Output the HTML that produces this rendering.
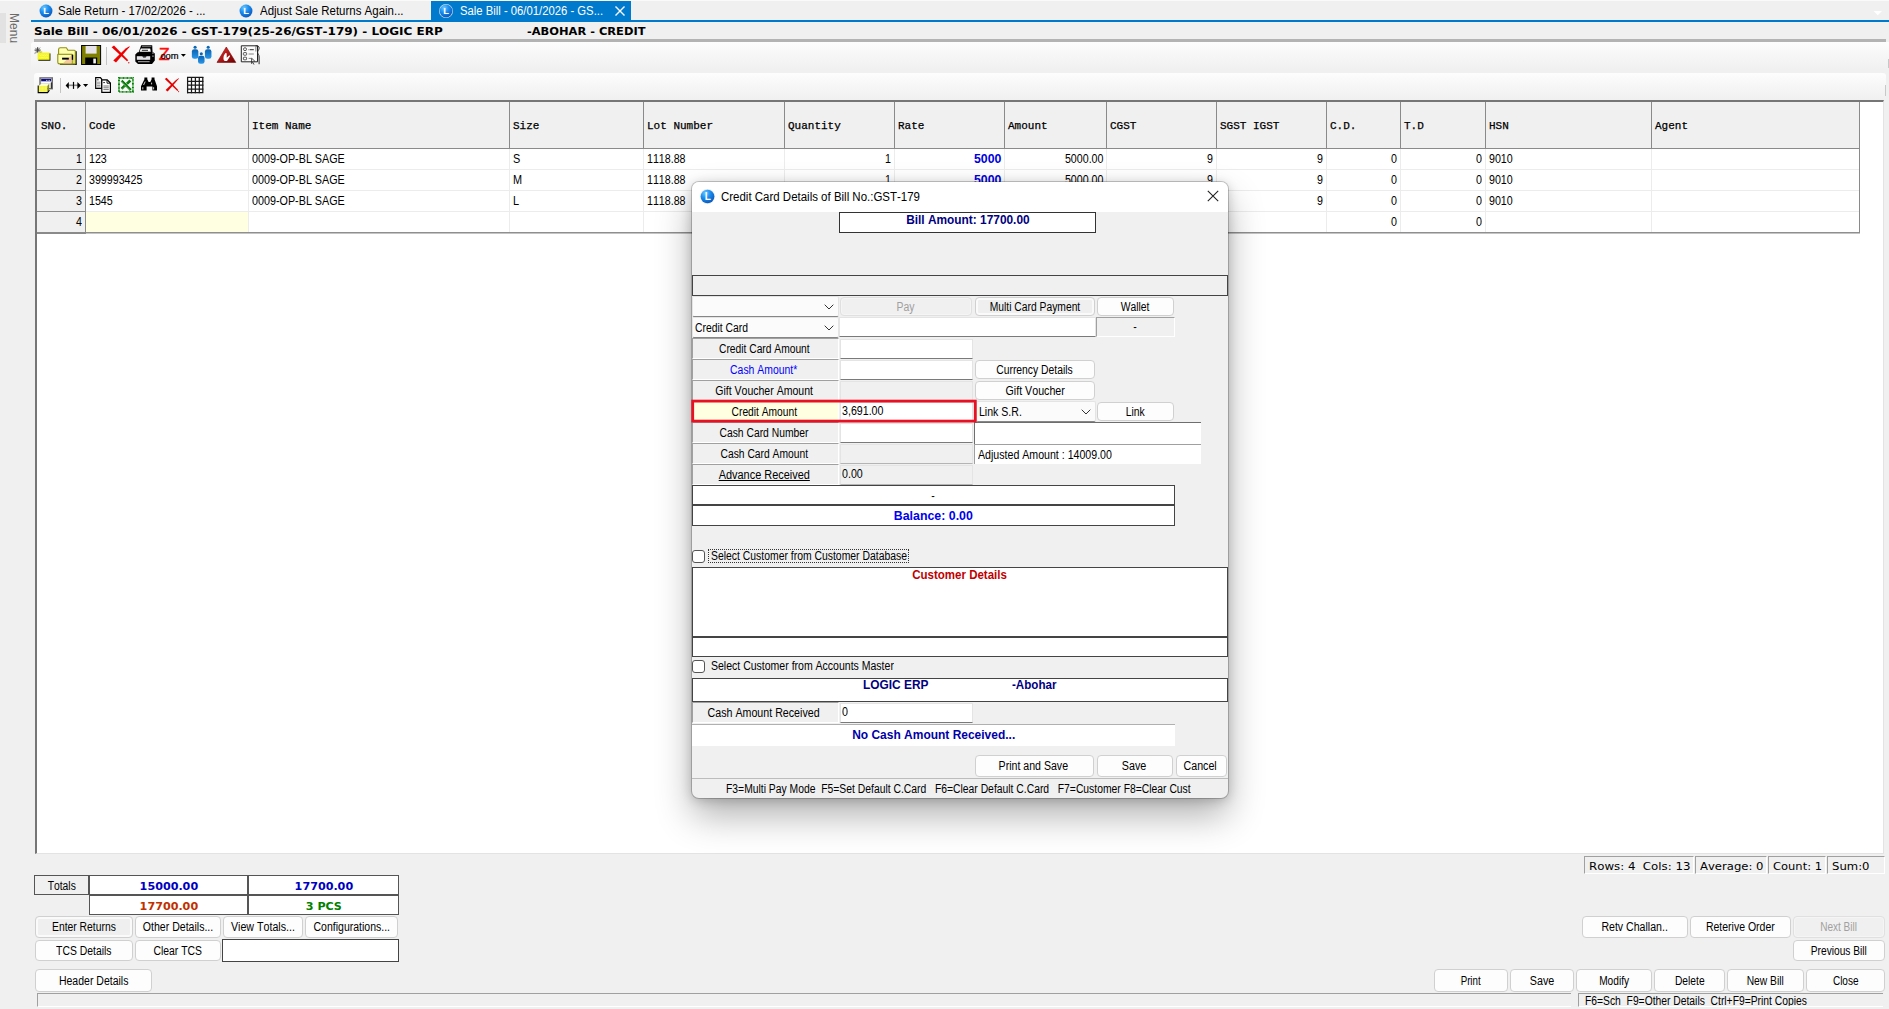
<!DOCTYPE html><html><head><meta charset="utf-8"><title>Sale Bill</title><style>
*{box-sizing:border-box;margin:0;padding:0}
html,body{width:1889px;height:1009px;overflow:hidden;background:#f0f0f0}
body{position:relative;font-family:"Liberation Sans",sans-serif;font-size:12.3px;color:#000}
.a{position:absolute;white-space:nowrap}
.seg{font-family:"Liberation Sans",sans-serif;font-size:12px}
.vb{font-family:"DejaVu Sans",sans-serif;font-weight:bold}
.v{font-family:"DejaVu Sans",sans-serif}
.mono{font-family:"Liberation Mono",monospace;font-weight:normal;font-size:11px;-webkit-text-stroke:0.25px #000}
.btn{position:absolute;border:1px solid #d0d0d0;border-radius:4px;background:#fdfdfd;text-align:center;white-space:nowrap}
.r{text-align:right}
.c{text-align:center}
.s{display:inline-block;white-space:nowrap;font-kerning:none}
</style></head><body>
<div class="a" style="left:0;top:0;width:1889px;height:1px;background:#fafafa"></div>
<div class="a" style="left:0;top:13px;width:6px;height:30px;background:#e2e2e2"></div>
<div class="a seg" style="left:3.5px;top:12.5px;width:20px;height:36px;color:#6a6a6a;font-size:13px;writing-mode:vertical-rl;line-height:20px"><span style="display:inline-block;transform:scaleY(0.925);transform-origin:center top">Menu</span></div>
<div class="a" style="left:31px;top:20px;width:1858px;height:2px;background:#007acc"></div>
<div class="a" style="left:431px;top:1px;width:200px;height:20px;background:#007acc"></div>
<svg class="a" style="left:39px;top:4px" width="14" height="14" viewBox="0 0 14 14"><defs><radialGradient id="lg1" cx="35%" cy="25%" r="80%"><stop offset="0" stop-color="#6cc8ff"/><stop offset="0.45" stop-color="#1c8ef0"/><stop offset="1" stop-color="#0a56b8"/></radialGradient></defs><circle cx="7" cy="7" r="6.95" fill="#dfe6ee"/><circle cx="7" cy="7" r="6.4" fill="url(#lg1)"/><text x="7.2" y="10.3" font-family="Liberation Sans,sans-serif" font-size="9.4" font-weight="bold" fill="#fff" text-anchor="middle">L</text></svg>
<div class="a" style="left:58px;top:3px;font-size:12.5px;line-height:16px;color:#000;"><span class="s" style="transform:scaleX(0.915);transform-origin:left center">Sale Return - 17/02/2026 - ...</span></div>
<svg class="a" style="left:239px;top:4px" width="14" height="14" viewBox="0 0 14 14"><defs><radialGradient id="lg2" cx="35%" cy="25%" r="80%"><stop offset="0" stop-color="#6cc8ff"/><stop offset="0.45" stop-color="#1c8ef0"/><stop offset="1" stop-color="#0a56b8"/></radialGradient></defs><circle cx="7" cy="7" r="6.95" fill="#dfe6ee"/><circle cx="7" cy="7" r="6.4" fill="url(#lg2)"/><text x="7.2" y="10.3" font-family="Liberation Sans,sans-serif" font-size="9.4" font-weight="bold" fill="#fff" text-anchor="middle">L</text></svg>
<div class="a" style="left:260px;top:3px;font-size:12.5px;line-height:16px;color:#000;"><span class="s" style="transform:scaleX(0.918);transform-origin:left center">Adjust Sale Returns Again...</span></div>
<svg class="a" style="left:439px;top:4px" width="14" height="14" viewBox="0 0 14 14"><defs><radialGradient id="lg3" cx="35%" cy="25%" r="80%"><stop offset="0" stop-color="#6cc8ff"/><stop offset="0.45" stop-color="#1c8ef0"/><stop offset="1" stop-color="#0a56b8"/></radialGradient></defs><circle cx="7" cy="7" r="6.95" fill="#dfe6ee"/><circle cx="7" cy="7" r="6.4" fill="url(#lg3)"/><text x="7.2" y="10.3" font-family="Liberation Sans,sans-serif" font-size="9.4" font-weight="bold" fill="#fff" text-anchor="middle">L</text></svg>
<div class="a" style="left:460px;top:3px;font-size:12.5px;line-height:16px;color:#fff;"><span class="s" style="transform:scaleX(0.903);transform-origin:left center">Sale Bill - 06/01/2026 - GS...</span></div>
<svg class="a" style="left:614px;top:5px" width="12" height="12" viewBox="0 0 12 12"><path d="M1.5 1.5L10.5 10.5M10.5 1.5L1.5 10.5" stroke="#fff" stroke-width="1.4"/></svg>
<svg class="a" style="left:1873px;top:10px" width="10" height="6" viewBox="0 0 10 6"><path d="M0.6 0.9H9L4.8 5.3Z" fill="#fff"/></svg>
<div class="a" style="left:34px;top:23.5px;font-size:11px;line-height:15px;color:#000;font-family:DejaVu Sans,sans-serif;font-weight:bold;"><span class="s" style="transform:scaleX(1.091);transform-origin:left center">Sale Bill - 06/01/2026 - GST-179(25-26/GST-179) - LOGIC ERP</span></div>
<div class="a" style="left:527px;top:23.5px;font-size:11px;line-height:15px;color:#000;font-family:DejaVu Sans,sans-serif;font-weight:bold;"><span class="s" style="transform:scaleX(1.039);transform-origin:left center">-ABOHAR - CREDIT</span></div>
<div class="a" style="left:34px;top:39px;width:1852px;height:3px;background:#b3b3b3"></div>
<div class="a" style="left:31px;top:42px;width:1858px;height:28px;background:linear-gradient(#fdfdfd,#f6f6f6 50%,#f0f0f0);border-radius:3px 0 0 3px"></div><div class="a" style="left:1888px;top:59px;width:1px;height:9px;background:#c8c8c8"></div>
<div class="a" style="left:34px;top:73px;width:1851.5px;height:27px;background:linear-gradient(#fdfdfd,#f6f6f6 50%,#f0f0f0);border-radius:3px"></div><div class="a" style="left:1885px;top:85px;width:1px;height:11px;background:#c8c8c8"></div>
<svg class="a" style="left:0;top:0" width="300" height="100" viewBox="0 0 300 100"><defs><linearGradient id="gtri" x1="0" y1="0" x2="1" y2="1"><stop offset="0" stop-color="#f03030"/><stop offset="1" stop-color="#6a0000"/></linearGradient><linearGradient id="gblu" x1="0" y1="0" x2="0" y2="1"><stop offset="0" stop-color="#0a62b0"/><stop offset="1" stop-color="#2a98ea"/></linearGradient></defs><rect x="38.3" y="53.4" width="12.1" height="7.3" fill="#000"/><rect x="37.6" y="52.6" width="12" height="7.2" fill="#f6f61e"/><rect x="39.6" y="51.2" width="2.6" height="1.6" fill="#d6d648"/><path d="M39.5 54.6l1.2 1.2 1.2-1.2 1.2 1.2 1.2-1.2 1.2 1.2 1.2-1.2 1.2 1.2M39.5 57l1.2 1.2 1.2-1.2 1.2 1.2 1.2-1.2 1.2 1.2 1.2-1.2 1.2 1.2" stroke="#ffffb0" stroke-width="0.7" fill="none" opacity="0.8"/><path d="M37.7 47.2V52.6M34.6 50.1H40.6" stroke="#111" stroke-width="0.9"/><path d="M35.4 47.9L39.8 52.3M40 47.6L35.2 52.6" stroke="#555" stroke-width="0.8"/><path d="M34.4 53.6L37 52.4" stroke="#888" stroke-width="0.7"/><rect x="75" y="51.2" width="1.7" height="13.5" fill="#000"/><rect x="60" y="63.6" width="16.7" height="1.2" fill="#1a1a00"/><path d="M58.6 54.5V49.6Q58.6 47.8 60.4 47.8H66.4L67.9 50.2H74.4Q75.3 50.2 75.3 51.2V63.6H72V54.5Z" fill="#ffffae" stroke="#8e8e14" stroke-width="1.1" stroke-linejoin="round"/><path d="M72.3 54.6H75V63.4H72.3Z" fill="#dcdc6a"/><path d="M57.8 54.3H72.1V63.9H59.6Q57.8 63.9 57.8 62.2Z" fill="#ffffb2" stroke="#8e8e14" stroke-width="1.1" stroke-linejoin="round"/><path d="M62.8 63.3L71.5 55.2V63.3Z" fill="#f7c6a2"/><rect x="71.8" y="54.8" width="1.3" height="5" fill="#000"/><rect x="62.1" y="57.7" width="6.7" height="1.9" fill="#000"/><rect x="81.6" y="45.5" width="19" height="19" fill="#808000" stroke="#000" stroke-width="1"/><rect x="85.6" y="45.9" width="11" height="7.7" fill="#e6e4ea"/><rect x="85.2" y="57.5" width="12" height="7" fill="#000"/><rect x="93.3" y="58.6" width="2.6" height="4.8" fill="#f4f4f4"/><rect x="106" y="47" width="1" height="18" fill="#c4c4c4"/><path d="M111.6 47.2L114 45.6L128.3 60.2L127 61.2Z" fill="#ee0000"/><path d="M129.8 45.9L129.3 47.3L116 62.6L113.3 60.5L125.6 48.4Z" fill="#ee0000"/><circle cx="128.8" cy="62.8" r="0.7" fill="#d02020"/><path d="M141.2 45.2H152.2L152.6 53H138.4Z" fill="#000"/><path d="M140.8 48.6H150.2L150.8 51.8H139.6Z" fill="#fff"/><rect x="141.8" y="49.8" width="6.2" height="0.9" fill="#000"/><path d="M142 46.6H151.4" stroke="#777" stroke-width="0.9"/><path d="M135.3 54.4L137.6 52.2H153L154.8 53.6V60.6L152 63.9H138L135.3 61.4Z" fill="#000"/><rect x="136.8" y="56.2" width="13.4" height="3.6" fill="#e4e4e8"/><path d="M142.2 56.2H146.6L145.6 57.6H143.2Z" fill="#000"/><rect x="138" y="61.2" width="11.6" height="1" fill="#b0b0b0"/><rect x="152.2" y="52.4" width="1.5" height="1.5" fill="#808080"/><rect x="152.2" y="55.4" width="1.5" height="1.5" fill="#808080"/><text transform="translate(158.8 59.8) scale(1.15 1)" font-family="Liberation Sans,sans-serif" font-size="15.6" fill="#ff1010" stroke="#ff1010" stroke-width="0.3">Z</text><text x="160.4" y="58.9" font-family="Liberation Sans,sans-serif" font-size="9.8" fill="#000" stroke="#000" stroke-width="0.2" textLength="18.2" lengthAdjust="spacingAndGlyphs">oom</text><path d="M180.9 53.9H185.9L183.4 56.8Z" fill="#000"/><circle cx="195.1" cy="47.3" r="1.55" fill="#0b66b4"/><rect x="191.85" y="49.2" width="6.5" height="9.6" rx="2.4" fill="url(#gblu)"/><circle cx="208.2" cy="47.3" r="1.55" fill="#0b66b4"/><rect x="204.95" y="49.2" width="6.5" height="9.6" rx="2.4" fill="url(#gblu)"/><circle cx="201.3" cy="53.8" r="1.55" fill="#0b66b4"/><rect x="198.05" y="55.7" width="6.5" height="8.1" rx="2.4" fill="url(#gblu)"/><path d="M226.3 47L235.8 62.4H217Z" fill="url(#gtri)" stroke="#7a0000" stroke-width="0.6" stroke-linejoin="round"/><path d="M225.3 53.2c0.8-0.5 1.4 0 1.4 1v3.6l2.4-2.2c0.7-0.5 1.3 0.2 0.8 0.9l-2.2 3.4c-0.6 1.5-3.3 1.6-4 0.1c-0.6-1.6 0-4.6 0.6-5.2z" fill="#fff"/><path d="M241.3 45.8H257.5V61.8H241.3Z" fill="#fbfbfb" stroke="#222" stroke-width="1"/><path d="M255.5 46c2.6-0.6 3.8 0.4 3.6 2.4c-0.2 1.6-1.6 2.6-1.4 4.2c0.2 1.6 1.4 2 1.4 4.4V64.2" fill="none" stroke="#222" stroke-width="1"/><path d="M255.8 46.5V51.5" stroke="#999" stroke-width="1.2"/><circle cx="245" cy="49.2" r="1.5" fill="none" stroke="#333" stroke-width="0.8"/><rect x="243.4" y="52.6" width="3.2" height="2.6" rx="0.6" fill="none" stroke="#333" stroke-width="0.8"/><rect x="243.4" y="57.2" width="3.2" height="2.6" rx="0.6" fill="none" stroke="#333" stroke-width="0.8"/><path d="M248.6 49.6H253.8" stroke="#555" stroke-width="1.2" stroke-dasharray="0.8 0.6 4 0"/><path d="M248.6 54H253.8M248.6 58.4H251" stroke="#666" stroke-width="0.8"/><path d="M251.6 58.2V63.6L252.8 62.4L254 64.6M251.6 58.2L255 61.4" fill="none" stroke="#222" stroke-width="0.8"/><rect x="40" y="77.9" width="12.3" height="10.8" fill="#dedede" stroke="#6c6c6c" stroke-width="1.4"/><rect x="41.2" y="79" width="9.9" height="2.2" fill="#0a0a90"/><path d="M46 80.4H50.6" stroke="#fff" stroke-width="0.8" stroke-dasharray="0.9 0.7"/><path d="M41.4 82.6H50.8" stroke="#fff" stroke-width="1"/><path d="M51.4 82.4V88.4" stroke="#111" stroke-width="0.9"/><path d="M38.6 86L41 84H49L47.4 86Z" fill="#ffffc8"/><rect x="38.6" y="86" width="8.8" height="6" fill="#f4f43a"/><path d="M39.4 87.2h7.4M39.4 88.6h7.4M39.4 90h7.4M39.4 91.4h7.4" stroke="#ffffb4" stroke-width="0.6" stroke-dasharray="0.7 0.7"/><path d="M47.4 86L49 84V89.8L47.4 92Z" fill="#8a8a10"/><path d="M38.2 85.6V92.6H47.6L49.4 90.2" fill="none" stroke="#000" stroke-width="1.1"/><rect x="60" y="78" width="1" height="15" fill="#c4c4c4"/><path d="M67 85.3H80" stroke="#8a8a8a" stroke-width="1.6"/><path d="M65.6 85.4L68.8 81.9V88.9Z" fill="#000"/><path d="M80.9 85.4L77.4 81.9V88.9Z" fill="#000"/><path d="M73.5 81.9V88.9" stroke="#000" stroke-width="1.2"/><path d="M83 83.9H88.2L85.6 87.1Z" fill="#000"/><path d="M95.7 77.7H100.4L101.6 79V88.4H95.7Z" fill="#fff" stroke="#000" stroke-width="1.2"/><path d="M97 79.8H98.6" stroke="#000" stroke-width="0.8"/><path d="M97 82.2H100.4M97 83.8H100.4M97 85.4H100.4M97 87H100.4" stroke="#7a7a7a" stroke-width="0.8"/><path d="M101.8 79.8H107.2L110.4 83V92.3H101.8Z" fill="#fff" stroke="#000" stroke-width="1.2" stroke-linejoin="miter"/><path d="M107 80V83.2H110.2" fill="none" stroke="#000" stroke-width="0.9"/><path d="M103.2 82.6H105" stroke="#000" stroke-width="0.8"/><path d="M103.4 86H108.8M103.4 87.8H108.8M103.4 89.6H108.8" stroke="#6a6a6a" stroke-width="0.9"/><rect x="119" y="78" width="13.9" height="13.9" fill="#fff" stroke="#008000" stroke-width="1.9" stroke-dasharray="0.9 0.45"/><path d="M121.6 80.6L130.8 90M130.4 80.4L121.6 88.8" stroke="#0d7d0d" stroke-width="2.7"/><path d="M121 81.4L129.8 90.4M123 79.8L131.6 88.8" stroke="#fff" stroke-width="0.45"/><path d="M125 86.8L121 90.6" stroke="#cfe8cf" stroke-width="0.5"/><path d="M144.4 77.4H147.3V79.3L148.6 82H150.3L151.6 79.3V77.4H154.5V79.3L157 86.2V90.6H152.4V86.4H146.6V90.6H141V86.2L144.4 79.3Z" fill="#000"/><path d="M142.8 87.2V89.4M145.2 81.6L143.6 85M153.6 87.2V89.4M151.6 82.6V84.4" stroke="#fff" stroke-width="0.8"/><path d="M164.8 78.9L166.6 77.7L178.4 90.3L177.4 91.1Z" fill="#e40000"/><path d="M179 77.9L178.6 78.9L167.6 91.6L165.6 90L176 80Z" fill="#e40000"/><circle cx="178.6" cy="91.6" r="0.6" fill="#d02020"/><rect x="187.4" y="77.4" width="15.4" height="15.4" fill="#fff"/><path d="M187.6 77V93.2M187 77.4H203.4" stroke="#1a1a1a" stroke-width="1.25"/><path d="M191.5 77V93.2M187 81.3H203.4" stroke="#1a1a1a" stroke-width="1.25"/><path d="M195.4 77V93.2M187 85.2H203.4" stroke="#1a1a1a" stroke-width="1.25"/><path d="M199.3 77V93.2M187 89.1H203.4" stroke="#1a1a1a" stroke-width="1.25"/><path d="M202.8 77V93.2M187 92.6H203.4" stroke="#1a1a1a" stroke-width="1.25"/></svg>
<div class="a" style="left:35px;top:100px;width:1849px;height:754px;background:#fff;border-left:2px solid #767676;border-top:2px solid #767676;border-right:1px solid #e3e3e3;border-bottom:1px solid #e3e3e3"></div>
<div class="a" style="left:37px;top:102px;width:1823px;height:47px;background:#f0f0f0;border-bottom:1px solid #8a8a8a;border-right:1px solid #8a8a8a"></div>
<div class="a" style="left:37px;top:149px;width:48px;height:84px;background:#f0f0f0"></div>
<div class="a" style="left:86px;top:212px;width:162px;height:21px;background:#ffffe1"></div>
<div class="a" style="left:85px;top:102px;width:1px;height:47px;background:#8a8a8a"></div>
<div class="a" style="left:85px;top:149px;width:1px;height:85px;background:#8a8a8a"></div>
<div class="a" style="left:248px;top:102px;width:1px;height:47px;background:#8a8a8a"></div>
<div class="a" style="left:248px;top:149px;width:1px;height:83px;background:#ececec"></div>
<div class="a" style="left:509px;top:102px;width:1px;height:47px;background:#8a8a8a"></div>
<div class="a" style="left:509px;top:149px;width:1px;height:83px;background:#ececec"></div>
<div class="a" style="left:643px;top:102px;width:1px;height:47px;background:#8a8a8a"></div>
<div class="a" style="left:643px;top:149px;width:1px;height:83px;background:#ececec"></div>
<div class="a" style="left:784px;top:102px;width:1px;height:47px;background:#8a8a8a"></div>
<div class="a" style="left:784px;top:149px;width:1px;height:83px;background:#ececec"></div>
<div class="a" style="left:894px;top:102px;width:1px;height:47px;background:#8a8a8a"></div>
<div class="a" style="left:894px;top:149px;width:1px;height:83px;background:#ececec"></div>
<div class="a" style="left:1004px;top:102px;width:1px;height:47px;background:#8a8a8a"></div>
<div class="a" style="left:1004px;top:149px;width:1px;height:83px;background:#ececec"></div>
<div class="a" style="left:1106px;top:102px;width:1px;height:47px;background:#8a8a8a"></div>
<div class="a" style="left:1106px;top:149px;width:1px;height:83px;background:#ececec"></div>
<div class="a" style="left:1216px;top:102px;width:1px;height:47px;background:#8a8a8a"></div>
<div class="a" style="left:1216px;top:149px;width:1px;height:83px;background:#ececec"></div>
<div class="a" style="left:1326px;top:102px;width:1px;height:47px;background:#8a8a8a"></div>
<div class="a" style="left:1326px;top:149px;width:1px;height:83px;background:#ececec"></div>
<div class="a" style="left:1400px;top:102px;width:1px;height:47px;background:#8a8a8a"></div>
<div class="a" style="left:1400px;top:149px;width:1px;height:83px;background:#ececec"></div>
<div class="a" style="left:1485px;top:102px;width:1px;height:47px;background:#8a8a8a"></div>
<div class="a" style="left:1485px;top:149px;width:1px;height:83px;background:#ececec"></div>
<div class="a" style="left:1651px;top:102px;width:1px;height:47px;background:#8a8a8a"></div>
<div class="a" style="left:1651px;top:149px;width:1px;height:83px;background:#ececec"></div>
<div class="a mono" style="left:41px;top:119px;line-height:14px">SNO.</div>
<div class="a mono" style="left:89px;top:119px;line-height:14px">Code</div>
<div class="a mono" style="left:252px;top:119px;line-height:14px">Item Name</div>
<div class="a mono" style="left:513px;top:119px;line-height:14px">Size</div>
<div class="a mono" style="left:647px;top:119px;line-height:14px">Lot Number</div>
<div class="a mono" style="left:788px;top:119px;line-height:14px">Quantity</div>
<div class="a mono" style="left:898px;top:119px;line-height:14px">Rate</div>
<div class="a mono" style="left:1008px;top:119px;line-height:14px">Amount</div>
<div class="a mono" style="left:1110px;top:119px;line-height:14px">CGST</div>
<div class="a mono" style="left:1220px;top:119px;line-height:14px">SGST IGST</div>
<div class="a mono" style="left:1330px;top:119px;line-height:14px">C.D.</div>
<div class="a mono" style="left:1404px;top:119px;line-height:14px">T.D</div>
<div class="a mono" style="left:1489px;top:119px;line-height:14px">HSN</div>
<div class="a mono" style="left:1655px;top:119px;line-height:14px">Agent</div>
<div class="a" style="left:37px;top:169px;width:48px;height:1px;background:#8a8a8a"></div>
<div class="a" style="left:86px;top:169px;width:1774px;height:1px;background:#ececec"></div>
<div class="a r" style="left:-118px;width:200px;top:152px;font-size:12.3px;line-height:14px;color:#000;"><span class="s" style="transform:scaleX(0.868);transform-origin:right center">1</span></div>
<div class="a" style="left:89px;top:152px;font-size:12.3px;line-height:14px;color:#000;"><span class="s" style="transform:scaleX(0.868);transform-origin:left center">123</span></div>
<div class="a" style="left:252px;top:152px;font-size:12.3px;line-height:14px;color:#000;"><span class="s" style="transform:scaleX(0.876);transform-origin:left center">0009-OP-BL SAGE</span></div>
<div class="a" style="left:513px;top:152px;font-size:12.3px;line-height:14px;color:#000;"><span class="s" style="transform:scaleX(0.886);transform-origin:left center">S</span></div>
<div class="a" style="left:647px;top:152px;font-size:12.3px;line-height:14px;color:#000;"><span class="s" style="transform:scaleX(0.867);transform-origin:left center">1118.88</span></div>
<div class="a r" style="left:691px;width:200px;top:152px;font-size:12.3px;line-height:14px;color:#000;"><span class="s" style="transform:scaleX(0.868);transform-origin:right center">1</span></div>
<div class="a r" style="left:801px;width:200px;top:152px;font-size:12.3px;line-height:14px;color:#0000e0;font-weight:bold;"><span class="s" style="transform:scaleX(1.001);transform-origin:right center">5000</span></div>
<div class="a r" style="left:903px;width:200px;top:152px;font-size:12.3px;line-height:14px;color:#000;"><span class="s" style="transform:scaleX(0.867);transform-origin:right center">5000.00</span></div>
<div class="a r" style="left:1013px;width:200px;top:152px;font-size:12.3px;line-height:14px;color:#000;"><span class="s" style="transform:scaleX(0.868);transform-origin:right center">9</span></div>
<div class="a r" style="left:1123px;width:200px;top:152px;font-size:12.3px;line-height:14px;color:#000;"><span class="s" style="transform:scaleX(0.868);transform-origin:right center">9</span></div>
<div class="a r" style="left:1197px;width:200px;top:152px;font-size:12.3px;line-height:14px;color:#000;"><span class="s" style="transform:scaleX(0.868);transform-origin:right center">0</span></div>
<div class="a r" style="left:1282px;width:200px;top:152px;font-size:12.3px;line-height:14px;color:#000;"><span class="s" style="transform:scaleX(0.868);transform-origin:right center">0</span></div>
<div class="a" style="left:1489px;top:152px;font-size:12.3px;line-height:14px;color:#000;"><span class="s" style="transform:scaleX(0.868);transform-origin:left center">9010</span></div>
<div class="a" style="left:37px;top:190px;width:48px;height:1px;background:#8a8a8a"></div>
<div class="a" style="left:86px;top:190px;width:1774px;height:1px;background:#ececec"></div>
<div class="a r" style="left:-118px;width:200px;top:173px;font-size:12.3px;line-height:14px;color:#000;"><span class="s" style="transform:scaleX(0.868);transform-origin:right center">2</span></div>
<div class="a" style="left:89px;top:173px;font-size:12.3px;line-height:14px;color:#000;"><span class="s" style="transform:scaleX(0.868);transform-origin:left center">399993425</span></div>
<div class="a" style="left:252px;top:173px;font-size:12.3px;line-height:14px;color:#000;"><span class="s" style="transform:scaleX(0.876);transform-origin:left center">0009-OP-BL SAGE</span></div>
<div class="a" style="left:513px;top:173px;font-size:12.3px;line-height:14px;color:#000;"><span class="s" style="transform:scaleX(0.886);transform-origin:left center">M</span></div>
<div class="a" style="left:647px;top:173px;font-size:12.3px;line-height:14px;color:#000;"><span class="s" style="transform:scaleX(0.867);transform-origin:left center">1118.88</span></div>
<div class="a r" style="left:691px;width:200px;top:173px;font-size:12.3px;line-height:14px;color:#000;"><span class="s" style="transform:scaleX(0.868);transform-origin:right center">1</span></div>
<div class="a r" style="left:801px;width:200px;top:173px;font-size:12.3px;line-height:14px;color:#0000e0;font-weight:bold;"><span class="s" style="transform:scaleX(1.001);transform-origin:right center">5000</span></div>
<div class="a r" style="left:903px;width:200px;top:173px;font-size:12.3px;line-height:14px;color:#000;"><span class="s" style="transform:scaleX(0.867);transform-origin:right center">5000.00</span></div>
<div class="a r" style="left:1013px;width:200px;top:173px;font-size:12.3px;line-height:14px;color:#000;"><span class="s" style="transform:scaleX(0.868);transform-origin:right center">9</span></div>
<div class="a r" style="left:1123px;width:200px;top:173px;font-size:12.3px;line-height:14px;color:#000;"><span class="s" style="transform:scaleX(0.868);transform-origin:right center">9</span></div>
<div class="a r" style="left:1197px;width:200px;top:173px;font-size:12.3px;line-height:14px;color:#000;"><span class="s" style="transform:scaleX(0.868);transform-origin:right center">0</span></div>
<div class="a r" style="left:1282px;width:200px;top:173px;font-size:12.3px;line-height:14px;color:#000;"><span class="s" style="transform:scaleX(0.868);transform-origin:right center">0</span></div>
<div class="a" style="left:1489px;top:173px;font-size:12.3px;line-height:14px;color:#000;"><span class="s" style="transform:scaleX(0.868);transform-origin:left center">9010</span></div>
<div class="a" style="left:37px;top:211px;width:48px;height:1px;background:#8a8a8a"></div>
<div class="a" style="left:86px;top:211px;width:1774px;height:1px;background:#ececec"></div>
<div class="a r" style="left:-118px;width:200px;top:194px;font-size:12.3px;line-height:14px;color:#000;"><span class="s" style="transform:scaleX(0.868);transform-origin:right center">3</span></div>
<div class="a" style="left:89px;top:194px;font-size:12.3px;line-height:14px;color:#000;"><span class="s" style="transform:scaleX(0.868);transform-origin:left center">1545</span></div>
<div class="a" style="left:252px;top:194px;font-size:12.3px;line-height:14px;color:#000;"><span class="s" style="transform:scaleX(0.876);transform-origin:left center">0009-OP-BL SAGE</span></div>
<div class="a" style="left:513px;top:194px;font-size:12.3px;line-height:14px;color:#000;"><span class="s" style="transform:scaleX(0.886);transform-origin:left center">L</span></div>
<div class="a" style="left:647px;top:194px;font-size:12.3px;line-height:14px;color:#000;"><span class="s" style="transform:scaleX(0.867);transform-origin:left center">1118.88</span></div>
<div class="a r" style="left:691px;width:200px;top:194px;font-size:12.3px;line-height:14px;color:#000;"><span class="s" style="transform:scaleX(0.868);transform-origin:right center">1</span></div>
<div class="a r" style="left:801px;width:200px;top:194px;font-size:12.3px;line-height:14px;color:#0000e0;font-weight:bold;"><span class="s" style="transform:scaleX(1.001);transform-origin:right center">5000</span></div>
<div class="a r" style="left:903px;width:200px;top:194px;font-size:12.3px;line-height:14px;color:#000;"><span class="s" style="transform:scaleX(0.867);transform-origin:right center">5000.00</span></div>
<div class="a r" style="left:1013px;width:200px;top:194px;font-size:12.3px;line-height:14px;color:#000;"><span class="s" style="transform:scaleX(0.868);transform-origin:right center">9</span></div>
<div class="a r" style="left:1123px;width:200px;top:194px;font-size:12.3px;line-height:14px;color:#000;"><span class="s" style="transform:scaleX(0.868);transform-origin:right center">9</span></div>
<div class="a r" style="left:1197px;width:200px;top:194px;font-size:12.3px;line-height:14px;color:#000;"><span class="s" style="transform:scaleX(0.868);transform-origin:right center">0</span></div>
<div class="a r" style="left:1282px;width:200px;top:194px;font-size:12.3px;line-height:14px;color:#000;"><span class="s" style="transform:scaleX(0.868);transform-origin:right center">0</span></div>
<div class="a" style="left:1489px;top:194px;font-size:12.3px;line-height:14px;color:#000;"><span class="s" style="transform:scaleX(0.868);transform-origin:left center">9010</span></div>
<div class="a" style="left:37px;top:232px;width:48px;height:2px;background:#8a8a8a"></div>
<div class="a" style="left:86px;top:232px;width:1774px;height:1px;background:#8f8f8f"></div>
<div class="a" style="left:86px;top:233px;width:1774px;height:1px;background:#c4c4c4"></div>
<div class="a r" style="left:-118px;width:200px;top:215px;font-size:12.3px;line-height:14px;color:#000;"><span class="s" style="transform:scaleX(0.868);transform-origin:right center">4</span></div>
<div class="a r" style="left:1197px;width:200px;top:215px;font-size:12.3px;line-height:14px;color:#000;"><span class="s" style="transform:scaleX(0.868);transform-origin:right center">0</span></div>
<div class="a r" style="left:1282px;width:200px;top:215px;font-size:12.3px;line-height:14px;color:#000;"><span class="s" style="transform:scaleX(0.868);transform-origin:right center">0</span></div>
<div class="a" style="left:1859px;top:149px;width:1px;height:84px;background:#8a8a8a"></div>
<div class="a" style="left:1584px;top:856px;width:110px;height:18px;border-left:1px solid #a0a0a0;border-top:1px solid #a0a0a0;border-right:1px solid #fff;border-bottom:1px solid #fff"></div>
<div class="a" style="left:1588.5px;top:858.5px;font-size:11px;line-height:15px;color:#000;font-family:DejaVu Sans,sans-serif;"><span class="s" style="transform:scaleX(1.071);transform-origin:left center">Rows: 4&nbsp; Cols: 13</span></div>
<div class="a" style="left:1695px;top:856px;width:72px;height:18px;border-left:1px solid #a0a0a0;border-top:1px solid #a0a0a0;border-right:1px solid #fff;border-bottom:1px solid #fff"></div>
<div class="a" style="left:1699.5px;top:858.5px;font-size:11px;line-height:15px;color:#000;font-family:DejaVu Sans,sans-serif;"><span class="s" style="transform:scaleX(1.058);transform-origin:left center">Average: 0</span></div>
<div class="a" style="left:1768px;top:856px;width:58px;height:18px;border-left:1px solid #a0a0a0;border-top:1px solid #a0a0a0;border-right:1px solid #fff;border-bottom:1px solid #fff"></div>
<div class="a" style="left:1772.5px;top:858.5px;font-size:11px;line-height:15px;color:#000;font-family:DejaVu Sans,sans-serif;"><span class="s" style="transform:scaleX(1.045);transform-origin:left center">Count: 1</span></div>
<div class="a" style="left:1827px;top:856px;width:58px;height:18px;border-left:1px solid #a0a0a0;border-top:1px solid #a0a0a0;border-right:1px solid #fff;border-bottom:1px solid #fff"></div>
<div class="a" style="left:1831.5px;top:858.5px;font-size:11px;line-height:15px;color:#000;font-family:DejaVu Sans,sans-serif;"><span class="s" style="transform:scaleX(1.060);transform-origin:left center">Sum:0</span></div>
<div class="a" style="left:34px;top:875px;width:55px;height:20px;background:#f0f0f0;border:1px solid #555;"></div>
<div class="a c" style="left:34px;width:56px;top:878.5px;font-size:12.3px;line-height:14px;color:#000;"><span class="s" style="transform:scaleX(0.841);transform-origin:center center">Totals</span></div>
<div class="a" style="left:89px;top:875px;width:159px;height:20px;background:#fff;border:1px solid #555;"></div>
<div class="a c" style="left:89px;width:159px;top:878.5px;font-size:11px;line-height:15px;color:#0000c0;font-family:DejaVu Sans,sans-serif;font-weight:bold;"><span class="s" style="transform:scaleX(1.013);transform-origin:center center">15000.00</span></div>
<div class="a" style="left:248px;top:875px;width:151px;height:20px;background:#fff;border:1px solid #555;"></div>
<div class="a c" style="left:248px;width:151px;top:878.5px;font-size:11px;line-height:15px;color:#0000c0;font-family:DejaVu Sans,sans-serif;font-weight:bold;"><span class="s" style="transform:scaleX(1.013);transform-origin:center center">17700.00</span></div>
<div class="a" style="left:89px;top:895px;width:159px;height:20px;background:#fff;border:1px solid #555;"></div>
<div class="a c" style="left:89px;width:159px;top:898.5px;font-size:11px;line-height:15px;color:#c03000;font-family:DejaVu Sans,sans-serif;font-weight:bold;"><span class="s" style="transform:scaleX(1.013);transform-origin:center center">17700.00</span></div>
<div class="a" style="left:248px;top:895px;width:151px;height:20px;background:#fff;border:1px solid #555;"></div>
<div class="a c" style="left:248px;width:151px;top:898.5px;font-size:11px;line-height:15px;color:#008000;font-family:DejaVu Sans,sans-serif;font-weight:bold;"><span class="s" style="transform:scaleX(1.013);transform-origin:center center">3 PCS</span></div>
<div class="btn" style="left:35px;top:916px;width:97.5px;height:22px;background:#fdfdfd;background:#efefef;box-shadow:inset 0 0 0 2px #fafafa"></div>
<div class="a c" style="left:35px;width:97.5px;top:920px;font-size:12.3px;line-height:14px;color:#000;"><span class="s" style="transform:scaleX(0.841);transform-origin:center center">Enter Returns</span></div>
<div class="btn" style="left:135px;top:916px;width:85.5px;height:22px;background:#fdfdfd"></div>
<div class="a c" style="left:135px;width:85.5px;top:920px;font-size:12.3px;line-height:14px;color:#000;"><span class="s" style="transform:scaleX(0.859);transform-origin:center center">Other Details...</span></div>
<div class="btn" style="left:223px;top:916px;width:79.5px;height:22px;background:#fdfdfd"></div>
<div class="a c" style="left:223px;width:79.5px;top:920px;font-size:12.3px;line-height:14px;color:#000;"><span class="s" style="transform:scaleX(0.867);transform-origin:center center">View Totals...</span></div>
<div class="btn" style="left:305px;top:916px;width:93px;height:22px;background:#fdfdfd"></div>
<div class="a c" style="left:305px;width:93px;top:920px;font-size:12.3px;line-height:14px;color:#000;"><span class="s" style="transform:scaleX(0.854);transform-origin:center center">Configurations...</span></div>
<div class="btn" style="left:35px;top:940px;width:97.5px;height:21px;background:#fdfdfd"></div>
<div class="a c" style="left:35px;width:97.5px;top:944px;font-size:12.3px;line-height:14px;color:#000;"><span class="s" style="transform:scaleX(0.846);transform-origin:center center">TCS Details</span></div>
<div class="btn" style="left:135px;top:940px;width:85.5px;height:21px;background:#fdfdfd"></div>
<div class="a c" style="left:135px;width:85.5px;top:944px;font-size:12.3px;line-height:14px;color:#000;"><span class="s" style="transform:scaleX(0.845);transform-origin:center center">Clear TCS</span></div>
<div class="a" style="left:222px;top:939px;width:177px;height:23px;background:#fff;border:1px solid #444;"></div>
<div class="btn" style="left:35px;top:969px;width:117px;height:23px;background:#fdfdfd"></div>
<div class="a c" style="left:35px;width:117px;top:974px;font-size:12.3px;line-height:14px;color:#000;"><span class="s" style="transform:scaleX(0.854);transform-origin:center center">Header Details</span></div>
<div class="btn" style="left:1582px;top:916px;width:106px;height:22px;background:#fdfdfd"></div>
<div class="a c" style="left:1582px;width:106px;top:920px;font-size:12.3px;line-height:14px;color:#000;"><span class="s" style="transform:scaleX(0.860);transform-origin:center center">Retv Challan..</span></div>
<div class="btn" style="left:1690px;top:916px;width:101px;height:22px;background:#fdfdfd"></div>
<div class="a c" style="left:1690px;width:101px;top:920px;font-size:12.3px;line-height:14px;color:#000;"><span class="s" style="transform:scaleX(0.854);transform-origin:center center">Reterive Order</span></div>
<div class="btn" style="left:1793px;top:916px;width:91.5px;height:22px;background:#fdfdfd;background:#f0f0f0;border-color:#e0e0e0;box-shadow:inset 0 0 0 1px #f5f5f5"></div>
<div class="a c" style="left:1793px;width:91.5px;top:920px;font-size:12.3px;line-height:14px;color:#a0a0a0;"><span class="s" style="transform:scaleX(0.816);transform-origin:center center">Next Bill</span></div>
<div class="btn" style="left:1793px;top:940px;width:91.5px;height:21px;background:#fdfdfd"></div>
<div class="a c" style="left:1793px;width:91.5px;top:944px;font-size:12.3px;line-height:14px;color:#000;"><span class="s" style="transform:scaleX(0.828);transform-origin:center center">Previous Bill</span></div>
<div class="btn" style="left:1434px;top:969px;width:74px;height:23px;background:#fdfdfd"></div>
<div class="a c" style="left:1434px;width:74px;top:974px;font-size:12.3px;line-height:14px;color:#000;"><span class="s" style="transform:scaleX(0.791);transform-origin:center center">Print</span></div>
<div class="btn" style="left:1510px;top:969px;width:63.5px;height:23px;background:#fdfdfd"></div>
<div class="a c" style="left:1510px;width:63.5px;top:974px;font-size:12.3px;line-height:14px;color:#000;"><span class="s" style="transform:scaleX(0.874);transform-origin:center center">Save</span></div>
<div class="btn" style="left:1576px;top:969px;width:76px;height:23px;background:#fdfdfd"></div>
<div class="a c" style="left:1576px;width:76px;top:974px;font-size:12.3px;line-height:14px;color:#000;"><span class="s" style="transform:scaleX(0.825);transform-origin:center center">Modify</span></div>
<div class="btn" style="left:1654px;top:969px;width:71px;height:23px;background:#fdfdfd"></div>
<div class="a c" style="left:1654px;width:71px;top:974px;font-size:12.3px;line-height:14px;color:#000;"><span class="s" style="transform:scaleX(0.835);transform-origin:center center">Delete</span></div>
<div class="btn" style="left:1727px;top:969px;width:77px;height:23px;background:#fdfdfd"></div>
<div class="a c" style="left:1727px;width:77px;top:974px;font-size:12.3px;line-height:14px;color:#000;"><span class="s" style="transform:scaleX(0.835);transform-origin:center center">New Bill</span></div>
<div class="btn" style="left:1806px;top:969px;width:78.5px;height:23px;background:#fdfdfd"></div>
<div class="a c" style="left:1806px;width:78.5px;top:974px;font-size:12.3px;line-height:14px;color:#000;"><span class="s" style="transform:scaleX(0.817);transform-origin:center center">Close</span></div>
<div class="a" style="left:37px;top:993px;width:1534px;height:14px;border-left:1px solid #a0a0a0;border-top:1px solid #a0a0a0;border-bottom:1px solid #fff"></div>
<div class="a" style="left:1578px;top:993px;width:305px;height:14px;border-left:1px solid #a0a0a0;border-top:1px solid #a0a0a0;border-bottom:1px solid #fff"></div>
<div class="a" style="left:1579px;top:994px;width:303px;height:12px;overflow:hidden">
<div class="a" style="left:6px;top:0px;font-size:12.3px;line-height:14px"><span class="s" style="transform:scaleX(0.839);transform-origin:left center">F6=Sch&nbsp; F9=Other Details&nbsp; Ctrl+F9=Print Copies</span></div>
</div>
<div class="a" style="left:692px;top:182px;width:536px;height:616px;background:#f0f0f0;border-radius:7px;box-shadow:0 0 0 1px rgba(0,0,0,0.2),0 2px 12px rgba(0,0,0,0.2),0 18px 36px rgba(0,0,0,0.3);overflow:hidden">
<div class="a" style="left:0;top:0;width:536px;height:30px;background:#fff"></div>
</div>
<svg class="a" style="left:700px;top:189px" width="15" height="15" viewBox="0 0 14 14"><defs><radialGradient id="lg4" cx="35%" cy="25%" r="80%"><stop offset="0" stop-color="#6cc8ff"/><stop offset="0.45" stop-color="#1c8ef0"/><stop offset="1" stop-color="#0a56b8"/></radialGradient></defs><circle cx="7" cy="7" r="6.95" fill="#dfe6ee"/><circle cx="7" cy="7" r="6.4" fill="url(#lg4)"/><text x="7.2" y="10.3" font-family="Liberation Sans,sans-serif" font-size="9.4" font-weight="bold" fill="#fff" text-anchor="middle">L</text></svg>
<div class="a" style="left:721px;top:189px;font-size:12.5px;line-height:16px;color:#000;"><span class="s" style="transform:scaleX(0.918);transform-origin:left center">Credit Card Details of Bill No.:GST-179</span></div>
<svg class="a" style="left:1207px;top:190px" width="12" height="12" viewBox="0 0 12 12"><path d="M0.8 0.8L11.2 11.2M11.2 0.8L0.8 11.2" stroke="#222" stroke-width="1.1"/></svg>
<div class="a" style="left:839px;top:212px;width:257px;height:21px;background:#fff;border:1px solid #333;"></div>
<div class="a c" style="left:839px;width:257px;top:213px;font-size:12.3px;line-height:14px;color:#000080;font-weight:bold;"><span class="s" style="transform:scaleX(0.966);transform-origin:center center">Bill Amount: 17700.00</span></div>
<div class="a" style="left:692px;top:275px;width:536px;height:21px;background:#f0f0f0;border:1px solid #444;"></div>
<div class="a" style="left:692px;top:296px;width:147px;height:21px;background:#fbfbfb;border:1px solid #e4e4e4;border-bottom:1px solid #868686;border-radius:2px"></div>
<svg class="a" style="left:824px;top:304px" width="10" height="6" viewBox="0 0 10 6"><path d="M0.7 0.7L5 5L9.3 0.7" fill="none" stroke="#333" stroke-width="1"/></svg>
<div class="btn" style="left:840px;top:297px;width:132px;height:19px;background:#fdfdfd;background:#f0f0f0;border-color:#e0e0e0;box-shadow:inset 0 0 0 1px #f5f5f5"></div>
<div class="a c" style="left:840px;width:132px;top:300px;font-size:12.3px;line-height:14px;color:#a0a0a0;"><span class="s" style="transform:scaleX(0.850);transform-origin:center center">Pay</span></div>
<div class="btn" style="left:975px;top:297px;width:119.5px;height:19px;background:#fdfdfd;background:#efefef;box-shadow:inset 0 0 0 2px #fafafa"></div>
<div class="a c" style="left:975px;width:119.5px;top:300px;font-size:12.3px;line-height:14px;color:#000;"><span class="s" style="transform:scaleX(0.838);transform-origin:center center">Multi Card Payment</span></div>
<div class="btn" style="left:1097px;top:297px;width:77px;height:19px;background:#fdfdfd"></div>
<div class="a c" style="left:1097px;width:77px;top:300px;font-size:12.3px;line-height:14px;color:#000;"><span class="s" style="transform:scaleX(0.841);transform-origin:center center">Wallet</span></div>
<div class="a" style="left:692px;top:317px;width:147px;height:21px;background:#fbfbfb;border:1px solid #e4e4e4;border-bottom:1px solid #868686;border-radius:2px"></div>
<svg class="a" style="left:824px;top:325px" width="10" height="6" viewBox="0 0 10 6"><path d="M0.7 0.7L5 5L9.3 0.7" fill="none" stroke="#333" stroke-width="1"/></svg>
<div class="a" style="left:695px;top:321px;font-size:12.3px;line-height:14px;color:#000;"><span class="s" style="transform:scaleX(0.844);transform-origin:left center">Credit Card</span></div>
<div class="a" style="left:839px;top:317px;width:257px;height:20px;background:#fff;border:1px solid #e4e4e4;border-bottom:1px solid #7a7a7a"></div>
<div class="a" style="left:1096px;top:317px;width:79px;height:20px;border-top:1px solid #a0a0a0;border-left:1px solid #a0a0a0;border-right:1px solid #fff;border-bottom:1px solid #fff"></div>
<div class="a c" style="left:1096px;width:78px;top:320px;font-size:12.3px;line-height:14px;color:#000;"><span class="s" style="transform:scaleX(0.860);transform-origin:center center">-</span></div>
<div class="a" style="left:692px;top:338px;width:147px;height:21px;background:#f0f0f0;border-top:1px solid #a0a0a0;border-left:1px solid #a0a0a0;border-right:1px solid #fff;border-bottom:1px solid #fff"></div>
<div class="a c" style="left:692px;width:144px;top:341.5px;font-size:12.3px;line-height:14px;color:#000;"><span class="s" style="transform:scaleX(0.834);transform-origin:center center">Credit Card Amount</span></div>
<div class="a" style="left:840px;top:339px;width:133px;height:20px;background:#fff;border:1px solid #e4e4e4;border-bottom:1px solid #7a7a7a"></div>
<div class="a" style="left:692px;top:359px;width:147px;height:21px;background:#f0f0f0;border-top:1px solid #a0a0a0;border-left:1px solid #a0a0a0;border-right:1px solid #fff;border-bottom:1px solid #fff"></div>
<div class="a c" style="left:692px;width:144px;top:362.5px;font-size:12.3px;line-height:14px;color:#0000ff;"><span class="s" style="transform:scaleX(0.846);transform-origin:center center">Cash Amount*</span></div>
<div class="a" style="left:840px;top:360px;width:133px;height:20px;background:#fff;border:1px solid #e4e4e4;border-bottom:1px solid #7a7a7a"></div>
<div class="btn" style="left:975px;top:360px;width:119.5px;height:19px;background:#fdfdfd"></div>
<div class="a c" style="left:975px;width:119.5px;top:363px;font-size:12.3px;line-height:14px;color:#000;"><span class="s" style="transform:scaleX(0.841);transform-origin:center center">Currency Details</span></div>
<div class="a" style="left:692px;top:380px;width:147px;height:21px;background:#f0f0f0;border-top:1px solid #a0a0a0;border-left:1px solid #a0a0a0;border-right:1px solid #fff;border-bottom:1px solid #fff"></div>
<div class="a c" style="left:692px;width:144px;top:383.5px;font-size:12.3px;line-height:14px;color:#000;"><span class="s" style="transform:scaleX(0.856);transform-origin:center center">Gift Voucher Amount</span></div>
<div class="a" style="left:840px;top:381px;width:133px;height:20px;background:#f0f0f0;border:1px solid #e4e4e4;border-bottom:1px solid #b4b4b4"></div>
<div class="btn" style="left:975px;top:381px;width:119.5px;height:19px;background:#fdfdfd"></div>
<div class="a c" style="left:975px;width:119.5px;top:384px;font-size:12.3px;line-height:14px;color:#000;"><span class="s" style="transform:scaleX(0.867);transform-origin:center center">Gift Voucher</span></div>
<div class="a" style="left:692px;top:401px;width:147px;height:21px;background:#ffffe1;border-top:1px solid #a0a0a0;border-left:1px solid #a0a0a0;border-right:1px solid #fff;border-bottom:1px solid #fff"></div>
<div class="a c" style="left:692px;width:144px;top:404.5px;font-size:12.3px;line-height:14px;color:#000;"><span class="s" style="transform:scaleX(0.832);transform-origin:center center">Credit Amount</span></div>
<div class="a" style="left:840px;top:402px;width:133px;height:20px;background:#fff;border:1px solid #e4e4e4;border-bottom:1px solid #7a7a7a"></div>
<div class="a" style="left:842px;top:404px;font-size:12.3px;line-height:14px;color:#000;"><span class="s" style="transform:scaleX(0.866);transform-origin:left center">3,691.00</span></div>
<div class="a" style="left:976px;top:401px;width:120px;height:21px;background:#fbfbfb;border:1px solid #e4e4e4;border-bottom:1px solid #868686;border-radius:2px"></div>
<svg class="a" style="left:1081px;top:409px" width="10" height="6" viewBox="0 0 10 6"><path d="M0.7 0.7L5 5L9.3 0.7" fill="none" stroke="#333" stroke-width="1"/></svg>
<div class="a" style="left:979px;top:405px;font-size:12.3px;line-height:14px;color:#000;"><span class="s" style="transform:scaleX(0.859);transform-origin:left center">Link S.R.</span></div>
<div class="btn" style="left:1097px;top:402px;width:77px;height:19px;background:#fdfdfd"></div>
<div class="a c" style="left:1097px;width:77px;top:405px;font-size:12.3px;line-height:14px;color:#000;"><span class="s" style="transform:scaleX(0.845);transform-origin:center center">Link</span></div>
<div class="a" style="left:692px;top:422px;width:147px;height:21px;background:#f0f0f0;border-top:1px solid #a0a0a0;border-left:1px solid #a0a0a0;border-right:1px solid #fff;border-bottom:1px solid #fff"></div>
<div class="a c" style="left:692px;width:144px;top:425.5px;font-size:12.3px;line-height:14px;color:#000;"><span class="s" style="transform:scaleX(0.840);transform-origin:center center">Cash Card Number</span></div>
<div class="a" style="left:840px;top:423px;width:133px;height:20px;background:#fff;border:1px solid #e4e4e4;border-bottom:1px solid #7a7a7a"></div>
<div class="a" style="left:974px;top:422px;width:227px;height:22px;background:#fff;border-top:1px solid #6e6e6e;border-left:1px solid #6e6e6e"></div>
<div class="a" style="left:692px;top:443px;width:147px;height:21px;background:#f0f0f0;border-top:1px solid #a0a0a0;border-left:1px solid #a0a0a0;border-right:1px solid #fff;border-bottom:1px solid #fff"></div>
<div class="a c" style="left:692px;width:144px;top:446.5px;font-size:12.3px;line-height:14px;color:#000;"><span class="s" style="transform:scaleX(0.837);transform-origin:center center">Cash Card Amount</span></div>
<div class="a" style="left:840px;top:444px;width:133px;height:20px;background:#f0f0f0;border:1px solid #e4e4e4;border-bottom:1px solid #b4b4b4"></div>
<div class="a" style="left:974px;top:444px;width:227px;height:20px;background:#fff;border-top:1px solid #a0a0a0;border-left:1px solid #a0a0a0"></div>
<div class="a" style="left:978px;top:448px;font-size:12.3px;line-height:14px;color:#000;"><span class="s" style="transform:scaleX(0.863);transform-origin:left center">Adjusted Amount : 14009.00</span></div>
<div class="a" style="left:692px;top:464px;width:147px;height:21px;background:#f0f0f0;border-top:1px solid #a0a0a0;border-left:1px solid #a0a0a0;border-right:1px solid #fff;border-bottom:1px solid #fff"></div>
<div class="a c" style="left:692px;width:144px;top:467.5px;font-size:12.3px;line-height:14px;color:#000;"><span class="s" style="transform:scaleX(0.889);transform-origin:center center;text-decoration:underline">Advance Received</span></div>
<div class="a" style="left:840px;top:465px;width:133px;height:20px;background:#f0f0f0;border:1px solid #e4e4e4;border-bottom:1px solid #b4b4b4"></div>
<div class="a" style="left:842px;top:467px;font-size:12.3px;line-height:14px;color:#000;"><span class="s" style="transform:scaleX(0.866);transform-origin:left center">0.00</span></div>
<svg class="a" style="left:688px;top:396px" width="294" height="31" viewBox="688 396 294 31"><rect x="692.7" y="401.1" width="282.6" height="20" fill="none" stroke="#e81123" stroke-width="2.8"/></svg>
<div class="a" style="left:692px;top:485px;width:483px;height:20px;background:#fff;border:1px solid #444;"></div>
<div class="a c" style="left:692px;width:483px;top:489px;font-size:12.3px;line-height:14px;color:#000;"><span class="s" style="transform:scaleX(0.860);transform-origin:center center">-</span></div>
<div class="a" style="left:692px;top:505px;width:483px;height:21px;background:#fff;border:1px solid #444;"></div>
<div class="a c" style="left:692px;width:483px;top:509px;font-size:12.3px;line-height:14px;color:#0000f0;font-weight:bold;"><span class="s" style="transform:scaleX(1.005);transform-origin:center center">Balance: 0.00</span></div>
<div class="a" style="left:692px;top:550px;width:13px;height:13px;background:#fff;border:1px solid #555;border-radius:3px"></div>
<div class="a" style="left:708px;top:549px;width:201px;height:14px;border:1px dotted #333"></div>
<div class="a" style="left:711px;top:549px;font-size:12.3px;line-height:14px;color:#000;"><span class="s" style="transform:scaleX(0.846);transform-origin:left center">Select Customer from Customer Database</span></div>
<div class="a" style="left:692px;top:567px;width:536px;height:70px;background:#fff;border:1px solid #444;"></div>
<div class="a c" style="left:692px;width:536px;top:568px;font-size:12.3px;line-height:14px;color:#c00000;font-weight:bold;"><span class="s" style="transform:scaleX(0.936);transform-origin:center center">Customer Details</span></div>
<div class="a" style="left:692px;top:637px;width:536px;height:20px;background:#fff;border:1px solid #444;"></div>
<div class="a" style="left:692px;top:660px;width:13px;height:13px;background:#fff;border:1px solid #555;border-radius:3px"></div>
<div class="a" style="left:711px;top:659px;font-size:12.3px;line-height:14px;color:#000;"><span class="s" style="transform:scaleX(0.855);transform-origin:left center">Select Customer from Accounts Master</span></div>
<div class="a" style="left:692px;top:678px;width:536px;height:24px;background:#fff;border:1px solid #444;"></div>
<div class="a" style="left:863px;top:678px;font-size:12.3px;line-height:14px;color:#000080;font-weight:bold;"><span class="s" style="transform:scaleX(0.968);transform-origin:left center">LOGIC ERP</span></div>
<div class="a" style="left:1012px;top:678px;font-size:12.3px;line-height:14px;color:#000080;font-weight:bold;"><span class="s" style="transform:scaleX(0.944);transform-origin:left center">-Abohar</span></div>
<div class="a" style="left:692px;top:702px;width:147px;height:21px;background:#f0f0f0;border-top:1px solid #a0a0a0;border-left:1px solid #a0a0a0;border-right:1px solid #fff;border-bottom:1px solid #fff"></div>
<div class="a c" style="left:692px;width:144px;top:705.5px;font-size:12.3px;line-height:14px;color:#000;"><span class="s" style="transform:scaleX(0.867);transform-origin:center center">Cash Amount Received</span></div>
<div class="a" style="left:840px;top:703px;width:133px;height:20px;background:#fff;border:1px solid #e4e4e4;border-bottom:1px solid #7a7a7a"></div>
<div class="a" style="left:842px;top:705px;font-size:12.3px;line-height:14px;color:#000;"><span class="s" style="transform:scaleX(0.868);transform-origin:left center">0</span></div>
<div class="a" style="left:692px;top:724px;width:483px;height:22px;background:#fff;border-top:1px solid #b0b0b0"></div>
<div class="a c" style="left:692px;width:483px;top:728px;font-size:12.3px;line-height:14px;color:#0000a8;font-weight:bold;"><span class="s" style="transform:scaleX(0.974);transform-origin:center center">No Cash Amount Received...</span></div>
<div class="btn" style="left:975px;top:755px;width:119px;height:22px;background:#fdfdfd"></div>
<div class="a c" style="left:974px;width:119px;top:759px;font-size:12.3px;line-height:14px;color:#000;"><span class="s" style="transform:scaleX(0.861);transform-origin:center center">Print and Save</span></div>
<div class="btn" style="left:1097px;top:755px;width:76px;height:22px;background:#fdfdfd"></div>
<div class="a c" style="left:1096.5px;width:76px;top:759px;font-size:12.3px;line-height:14px;color:#000;"><span class="s" style="transform:scaleX(0.874);transform-origin:center center">Save</span></div>
<div class="btn" style="left:1176px;top:755px;width:51px;height:22px;background:#fdfdfd"></div>
<div class="a c" style="left:1174.5px;width:51px;top:759px;font-size:12.3px;line-height:14px;color:#000;"><span class="s" style="transform:scaleX(0.867);transform-origin:center center">Cancel</span></div>
<div class="a" style="left:692px;top:778px;width:536px;height:1px;background:#bcbcbc"></div>
<div class="a" style="left:726px;top:782px;font-size:12.3px;line-height:14px;color:#000;"><span class="s" style="transform:scaleX(0.842);transform-origin:left center">F3=Multi Pay Mode&nbsp; F5=Set Default C.Card&nbsp;&nbsp; F6=Clear Default C.Card&nbsp;&nbsp; F7=Customer F8=Clear Cust</span></div>
</body></html>
